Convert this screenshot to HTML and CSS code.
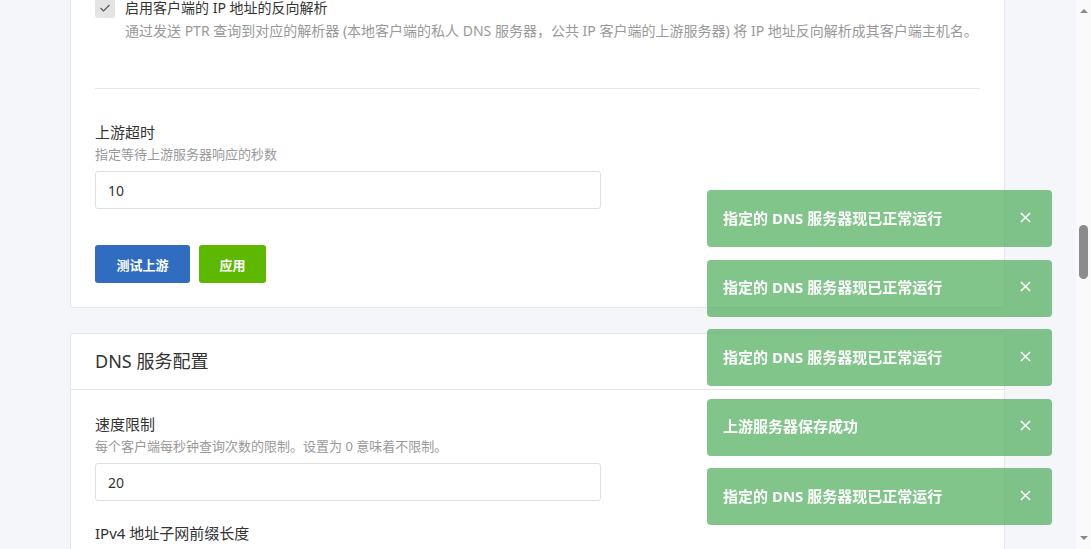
FILE: index.html
```html
<!DOCTYPE html>
<html lang="zh-CN">
    <head>
        <meta charset="utf-8" />
        <meta name="viewport" content="width=device-width, initial-scale=1" />
        <title>DNS 设置</title>
        <link rel="stylesheet" href="styles.css">
    </head>
    <body>
        <div class="window">
            <div class="main">
                <div class="content">
                    <div class="card">
                        <div class="card-body">
                            <div class="checkbox-row">
                                <span class="checkbox">
                                    <svg width="12" height="10" viewBox="0 0 12 10"><path d="M1.5 5 L4.5 8 L10.5 2" fill="none" stroke="#555" stroke-width="1.1"/></svg>
                                </span>
                                <span class="checkbox-label">启用客户端的 IP 地址的反向解析</span>
                            </div>
                            <div class="checkbox-desc">通过发送 PTR 查询到对应的解析器 (本地客户端的私人 DNS 服务器，公共 IP 客户端的上游服务器) 将 IP 地址反向解析成其客户端主机名。</div>

                            <hr class="divider">

                            <div class="form-group">
                                <div class="form-label">上游超时</div>
                                <div class="form-desc">指定等待上游服务器响应的秒数</div>
                                <input class="form-input" type="text" value="10">
                            </div>

                            <div class="actions">
                                <button class="btn btn-primary">测试上游</button>
                                <button class="btn btn-success">应用</button>
                            </div>
                        </div>
                    </div>

                    <div class="card">
                        <div class="card-header">DNS 服务配置</div>
                        <div class="card-body">
                            <div class="form-group">
                                <div class="form-label">速度限制</div>
                                <div class="form-desc">每个客户端每秒钟查询次数的限制。设置为 0 意味着不限制。</div>
                                <input class="form-input" type="text" value="20">
                            </div>
                            <div class="form-group spaced">
                                <div class="form-label">IPv4 地址子网前缀长度</div>
                                <div class="form-desc">用于速度限制时对 IPv4 客户端地址进行分组的子网前缀长度。</div>
                                <input class="form-input" type="text" value="24">
                            </div>
                        </div>
                    </div>
                </div>
            </div>

            <div class="scrollbar">
                <span class="arrow-up"></span>
                <span class="thumb"></span>
                <span class="arrow-down"></span>
            </div>
        </div>

        <div class="toasts">
            <div class="toast">
                <span>指定的 DNS 服务器现已正常运行</span>
                <svg class="toast-close" width="11" height="11" viewBox="0 0 12 12"><path d="M1 1 L11 11 M11 1 L1 11" stroke="#fff" stroke-width="1.6"/></svg>
            </div>
            <div class="toast">
                <span>指定的 DNS 服务器现已正常运行</span>
                <svg class="toast-close" width="11" height="11" viewBox="0 0 12 12"><path d="M1 1 L11 11 M11 1 L1 11" stroke="#fff" stroke-width="1.6"/></svg>
            </div>
            <div class="toast">
                <span>指定的 DNS 服务器现已正常运行</span>
                <svg class="toast-close" width="11" height="11" viewBox="0 0 12 12"><path d="M1 1 L11 11 M11 1 L1 11" stroke="#fff" stroke-width="1.6"/></svg>
            </div>
            <div class="toast">
                <span>上游服务器保存成功</span>
                <svg class="toast-close" width="11" height="11" viewBox="0 0 12 12"><path d="M1 1 L11 11 M11 1 L1 11" stroke="#fff" stroke-width="1.6"/></svg>
            </div>
            <div class="toast">
                <span>指定的 DNS 服务器现已正常运行</span>
                <svg class="toast-close" width="11" height="11" viewBox="0 0 12 12"><path d="M1 1 L11 11 M11 1 L1 11" stroke="#fff" stroke-width="1.6"/></svg>
            </div>
        </div>
    </body>
</html>
```

FILE: styles.css
```css
body, html {
    margin: 0;
    padding: 0;
    height: 100%;
    overflow: hidden;
    font-family: "Noto Sans", "Noto Sans CJK SC", sans-serif;
    background: #f5f6fa;
    color: #333;
}

.window {
    display: flex;
    height: 549px;
}

.main {
    flex: 1;
    overflow: hidden;
}

.content {
    margin-top: -27px;
    padding: 0 71px 0 70px;
}

.card {
    background: #fff;
    border: 1px solid #e3e6eb;
    border-radius: 3px;
    margin-bottom: 25px;
}

.card-body {
    padding: 24px 24px 24px 24px;
}

.card-header {
    height: 55px;
    line-height: 55px;
    padding: 0 24px;
    font-size: 18px;
    color: #333;
    border-bottom: 1px solid #e3e6eb;
}

/* checkbox */
.checkbox-row {
    display: flex;
    align-items: flex-start;
    gap: 10px;
}

.checkbox {
    width: 20px;
    height: 20px;
    border-radius: 3px;
    background: #e4e4e4;
    display: flex;
    align-items: center;
    justify-content: center;
}

.checkbox-label {
    font-size: 14px;
    line-height: 20px;
    color: #333;
}

.checkbox-desc {
    margin-top: 3px;
    padding-left: 30px;
    font-size: 14px;
    line-height: 20px;
    color: #999;
}

.divider {
    margin: 47px 0 0 0;
    border: none;
    border-top: 1px solid #e6e8eb;
}

/* form */
.form-group {
    margin-top: 33px;
}

.card-header + .card-body .form-group:first-child {
    margin-top: 0;
}

.form-group.spaced {
    margin-top: 22px;
}

.form-label {
    font-size: 15px;
    line-height: 20px;
    color: #333;
}

.form-desc {
    margin-top: 3px;
    font-size: 13px;
    line-height: 18px;
    color: #999;
}

.form-input {
    display: block;
    box-sizing: border-box;
    margin-top: 8px;
    width: 506px;
    height: 38px;
    padding: 0 12px;
    border: 1px solid #dde1e6;
    border-radius: 3px;
    font-family: inherit;
    font-size: 14px;
    color: #333;
    background: #fff;
}

.actions {
    display: flex;
    gap: 9px;
    margin-top: 36px;
}

.btn {
    height: 38px;
    padding: 0 20px;
    border: none;
    border-radius: 3px;
    font-family: inherit;
    font-size: 13px;
    font-weight: bold;
    color: #fff;
    cursor: pointer;
}

.btn-primary {
    background-color: #306cc0;
    width: 95px;
}

.btn-success {
    background-color: #5cb900;
    width: 67px;
}

/* fake browser scrollbar */
.scrollbar {
    width: 15px;
    background: #fafafa;
    display: flex;
    flex-direction: column;
    align-items: center;
}

.arrow-up {
    margin-top: 9px;
    width: 0;
    height: 0;
    border-left: 4px solid transparent;
    border-right: 4px solid transparent;
    border-bottom: 4px solid #8a8a8a;
}

.thumb {
    margin-top: 212px;
    width: 9px;
    height: 54px;
    border-radius: 5px;
    background: #8b8b8b;
}

.arrow-down {
    margin-top: auto;
    margin-bottom: 9px;
    width: 0;
    height: 0;
    border-left: 4px solid transparent;
    border-right: 4px solid transparent;
    border-top: 4px solid #8a8a8a;
}

/* notifications */
.toasts {
    position: fixed;
    top: 190px;
    right: 39px;
    width: 345px;
    display: flex;
    flex-direction: column;
    gap: 12.5px;
    z-index: 9999;
}

.toast {
    height: 57px;
    box-sizing: border-box;
    padding: 0 21px 3px 16px;
    display: flex;
    align-items: center;
    justify-content: space-between;
    background-color: rgba(76, 172, 88, 0.7);
    border-radius: 4px;
    color: #fff;
    font-size: 15px;
    font-weight: bold;
}
```
